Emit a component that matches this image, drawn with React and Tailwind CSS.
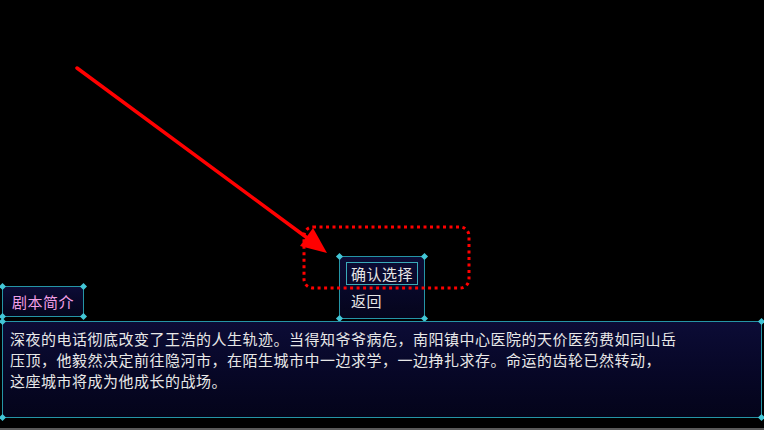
import React from "react";

function Corners() {
  const dot = "absolute w-[5px] h-[5px] bg-[#43c6d6] rotate-45";
  return (
    <>
      <span className={`${dot} -left-[3px] -top-[3px]`} />
      <span className={`${dot} -right-[3px] -top-[3px]`} />
      <span className={`${dot} -left-[3px] -bottom-[3px]`} />
      <span className={`${dot} -right-[3px] -bottom-[3px]`} />
    </>
  );
}

export default function App() {
  const font = { fontFamily: '"Noto Sans CJK SC", "Noto Sans", sans-serif' };
  return (
    <div
      className="relative w-[764px] h-[430px] bg-black flex flex-col overflow-hidden"
      style={font}
    >
      <div className="flex-1" />
      <div className="flex items-end">
        <div className="relative ml-[2px] mb-[2px] w-[82px] h-[31px] border border-[#2595a6] rounded-[3px] bg-gradient-to-b from-[#0c0c36] to-[#05051c] flex items-center justify-center">
          <Corners />
          <span className="text-[15px] leading-none tracking-[0.5px] text-[#f29fe6]">剧本简介</span>
        </div>
        <div className="relative ml-[255px] w-[86px] h-[63px] border border-[#2595a6] rounded-[4px] bg-gradient-to-b from-[#0c0c36] to-[#05051c] flex flex-col px-[6px] pt-[5px]">
          <Corners />
          <div className="h-[23px] border border-[#3aaab9] flex items-center pl-[4px]">
            <span className="text-[15px] leading-none tracking-[0.5px] text-[#e6e6e6]">确认选择</span>
          </div>
          <div className="h-[22px] flex items-center pl-[5px] mt-[4px]">
            <span className="text-[15px] leading-none tracking-[0.5px] text-[#e6e6e6]">返回</span>
          </div>
        </div>
      </div>
      <div className="relative mt-[2px] mx-[2px] h-[97px] border border-[#2595a6] rounded-[3px] bg-gradient-to-b from-[#0c0c36] to-[#04041a] pl-[7px] pt-[6px] text-[15px] leading-[21px] tracking-[0.5px] text-[#e8e8e8]">
        <Corners />
        <div>深夜的电话彻底改变了王浩的人生轨迹。当得知爷爷病危，南阳镇中心医院的天价医药费如同山岳</div>
        <div>压顶，他毅然决定前往隐河市，在陌生城市中一边求学，一边挣扎求存。命运的齿轮已然转动，</div>
        <div>这座城市将成为他成长的战场。</div>
      </div>
      <div className="h-[10px]" />
      <div className="h-[2px] bg-[#5a5a5a]" />

      <svg
        className="absolute left-0 top-0 pointer-events-none"
        width="764"
        height="430"
        viewBox="0 0 764 430"
      >
        <line x1="77" y1="68" x2="310" y2="240" stroke="#ff0000" strokeWidth="3.5" strokeLinecap="round" />
        <polygon points="327,253 300,246 313,228" fill="#ff0000" />
        <rect
          x="304"
          y="227"
          width="165"
          height="61"
          rx="9"
          fill="none"
          stroke="#ff0000"
          strokeWidth="3"
          strokeDasharray="3 3.5"
        />
      </svg>
    </div>
  );
}
